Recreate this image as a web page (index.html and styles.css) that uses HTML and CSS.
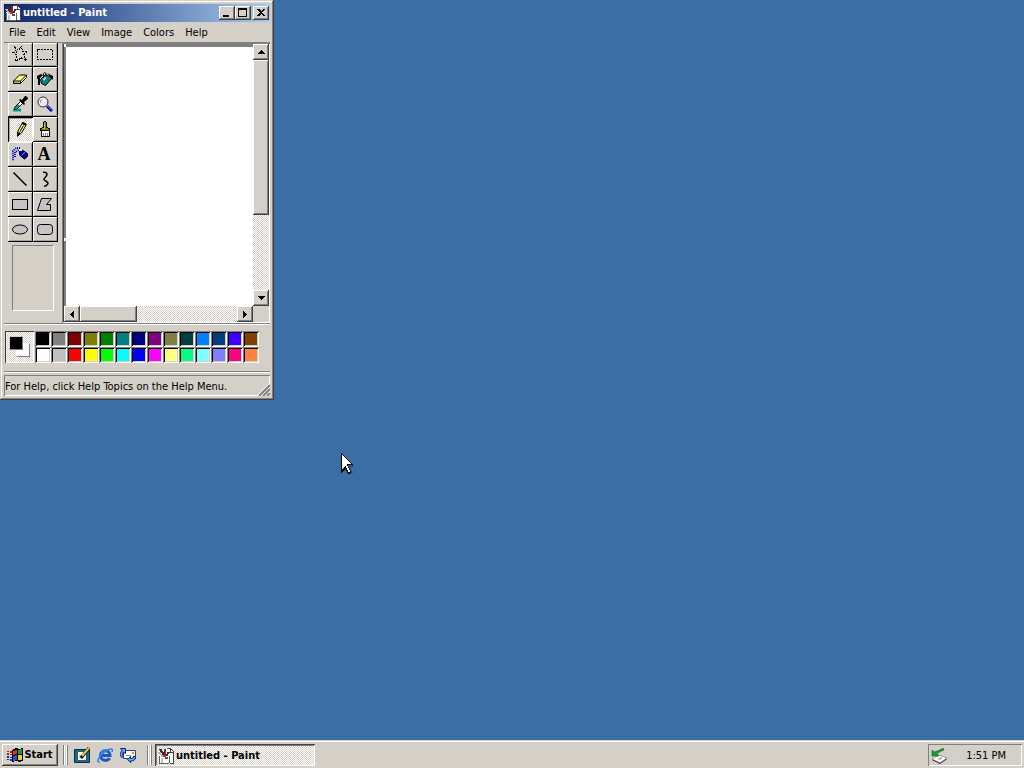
FILE: index.html
```html
<!DOCTYPE html>
<html lang="en">
<head>
    <meta charset="UTF-8">
    <meta name="viewport" content="width=device-width, initial-scale=1.0">
    <title>untitled - Paint</title>
    <link rel="stylesheet" href="styles.css">
</head>
<body>
    <!-- Shared icons -->
    <svg class="defs" width="0" height="0" aria-hidden="true">
        <symbol id="icon-paint" viewBox="0 0 16 16">
            <path fill="#fff" d="M7 1h6l3 3v11H7z"/>
            <path fill="#404040" d="M9 0h4v1H9zM13 1h1v1h1v1h1v2h-4V1zM15 5h1v11h-4v-1h3z"/>
            <path fill="#fff" d="M13 2v2h2z"/>
            <path fill="#fff" d="M1 7h11l-1 9H2z"/>
            <path fill="#606060" d="M1 8h1v7h1v1H1zM11 8h1v7h-1v1H3v-1h8z"/>
            <path fill="#c6c3c6" d="M3 10h2v5H3z"/>
            <path stroke="#303030" stroke-width="2" d="M2 1l4 6"/>
            <path stroke="#c0b8b0" stroke-width="2" d="M1 4l4 5"/>
            <path fill="#802030" d="M6 1h2v7H6z"/>
            <path stroke="#302850" stroke-width="2" d="M11 4L8 8"/>
            <path fill="#e02020" d="M5 7h3v2H5z"/>
            <path fill="#505050" d="M7 9h3v2H7z"/>
        </symbol>
    </svg>

    <main class="desktop">
        <section class="window" aria-label="untitled - Paint">
            <header class="titlebar">
                <svg class="icon"><use href="#icon-paint"/></svg>
                <h1>untitled - Paint</h1>
                <div class="window-buttons">
                    <button aria-label="Minimize"><svg width="12" height="10"><path d="M2 7h6v2H2z"/></svg></button>
                    <button aria-label="Maximize"><svg width="12" height="10"><path d="M1 0h9v9H1zM2 2v6h7V2z" fill-rule="evenodd"/></svg></button>
                    <button class="close" aria-label="Close"><svg width="12" height="10"><path d="M2 1h2l2 2 2-2h2L7 4.500 10 8H8L6 6 4 8H2l3-3.500z"/></svg></button>
                </div>
            </header>

            <nav class="menu">
                <button>File</button>
                <button>Edit</button>
                <button>View</button>
                <button>Image</button>
                <button>Colors</button>
                <button>Help</button>
            </nav>

            <div class="workspace">
                <aside class="toolbox">
                    <div class="tools">
                        <button aria-label="Free-Form Select"><svg viewBox="0 0 16 16"><path fill="none" stroke="#000" stroke-dasharray="2 1" d="M2.500.5l4 4 3-4 1 5h5l-4 3.500 3 5.500-5-2.500-6 3 1.500-5.500-4.500-3.500h4z"/></svg></button>
                        <button aria-label="Select"><svg viewBox="0 0 16 16"><path fill="none" stroke="#000" stroke-dasharray="2 1" d="M.5 3.500h15v10H.5z"/></svg></button>
                        <button aria-label="Eraser"><svg class="smooth" viewBox="0 0 16 16"><path fill="#ffff84" stroke="#000" d="M1.500 10l6-6h7v2.500l-6 6h-7z"/><path fill="#c6c342" d="M2 10.500h6v1.500H2z"/><path fill="none" stroke="#000" d="M8.500 12.500V10l6-6M1.500 10h7"/></svg></button>
                        <button aria-label="Fill With Color"><svg class="smooth" viewBox="0 0 16 16"><path fill="#008284" stroke="#000" d="M3.500 8.500l5-5 6.500 3.500-6.500 7.500-4-2z"/><path fill="#d0e8e8" d="M6 8l3-3 1 1-3 4z"/><path fill="none" stroke="#000" d="M6.500 7V2.500l1-1 1.500 1v4"/><path fill="#000" d="M0 5l4-2 2 1-3 3v7H1V8H0z"/><path fill="#000" d="M10 2l6 3v4l-2-2z"/></svg></button>
                        <button aria-label="Pick Color"><svg class="smooth" viewBox="0 0 16 16"><path stroke="#00a284" stroke-width="3" d="M1 14h8"/><path fill="#fff" stroke="#000" d="M2.500 13.500v-2l6-6 2 2-6 6z"/><path fill="#000" d="M7 4l1-1 2 1 3-4h1l2 2v1l-4 3 1 2-1 1z"/><path stroke="#008284" stroke-width="2" d="M3 13l4-4"/></svg></button>
                        <button aria-label="Magnifier"><svg class="smooth" viewBox="0 0 16 16"><circle cx="6" cy="6" r="5" fill="#efebef" stroke="#303030"/><path fill="none" stroke="#848284" d="M3.500 6.500V5L5 3.500"/><path stroke="#0000a5" stroke-width="3" d="M10 10l5 5"/><path stroke="#8482ff" d="M10 9.500l5 5"/></svg></button>
                        <button class="active" aria-label="Pencil" aria-pressed="true"><svg class="smooth" viewBox="0 0 16 16"><path fill="#ffff84" stroke="#000" d="M10.500 1.500l3.500 1.500-.5 2-4 7-4 3 .5-5z"/><path fill="#000" d="M5 11l4 1.500-4 3.500zM10 3l4 2 .5-2L11 1z"/><path stroke="#000" d="M11.500 4.500l-4 7"/></svg></button>
                        <button aria-label="Brush"><svg viewBox="0 0 16 16"><path fill="#848200" stroke="#000" d="M6.500 6V1.500l1-1h1l1 1V6l3 2v1.500h-9V8z"/><path fill="#c6c300" d="M7 2h1v6H5l2-2z"/><path fill="#fff" stroke="#000" d="M4.500 9.500h8v6h-8z"/><path stroke="#848284" d="M6.500 12v3M8.500 12v3M10.500 12v3"/></svg></button>
                        <button aria-label="Airbrush"><svg class="smooth" viewBox="0 0 16 16"><path fill="none" stroke="#0000c6" stroke-dasharray="1 1" stroke-width="2" d="M8 2H4L1 5v10M3 11V6l4-2"/><path fill="#0000a5" stroke="#000" d="M7.500 5.500l2-2 6 4v3l-3 2.500-5-4z"/><path fill="#fff" d="M7 3h3v2H7z"/><path stroke="#8482ff" d="M10 9l3-3"/></svg></button>
                        <button class="text-tool" aria-label="Text">A</button>
                        <button aria-label="Line"><svg class="smooth" viewBox="0 0 16 16"><path stroke="#000" stroke-width="1.500" d="M1.500 1.500l13 13"/></svg></button>
                        <button aria-label="Curve"><svg class="smooth" viewBox="0 0 16 16"><path fill="none" stroke="#000" stroke-width="1.500" d="M6 1.500c4-1 5 2 2.500 4.500s-2 3 1 4.500 1 4-2.500 5"/></svg></button>
                        <button aria-label="Rectangle"><svg viewBox="0 0 16 16"><path fill="#c6c3c6" stroke="#000" d="M.5 3.500h15v10H.5z"/></svg></button>
                        <button aria-label="Polygon"><svg class="smooth" viewBox="0 0 16 16"><path fill="#c6c3c6" stroke="#000" d="M4.500 2.500h10l-5 6h4v6H.5z"/></svg></button>
                        <button aria-label="Ellipse"><svg class="smooth" viewBox="0 0 16 16"><ellipse cx="8" cy="8.500" rx="7.500" ry="4.500" fill="#c6c3c6" stroke="#000"/></svg></button>
                        <button aria-label="Rounded Rectangle"><svg class="smooth" viewBox="0 0 16 16"><rect x=".5" y="3.500" width="15" height="10" rx="3" fill="#c6c3c6" stroke="#000"/></svg></button>
                    </div>
                    <div class="tool-options"></div>
                </aside>

                <div class="view">
                    <div class="page">
                        <span class="handle"></span>
                        <div class="paper"></div>
                        <span class="handle middle"></span>
                    </div>
                    <div class="scrollbar vertical">
                        <button aria-label="Scroll up"><svg width="7" height="4"><path d="M3 0h1v1h1v1h1v1h1v1H0V3h1V2h1V1h1z"/></svg></button>
                        <div class="thumb"></div>
                        <button class="end" aria-label="Scroll down"><svg width="7" height="4"><path d="M0 0h7v1H6v1H5v1H4v1H3V3H2V2H1V1H0z"/></svg></button>
                    </div>
                    <div class="scrollbar horizontal">
                        <button aria-label="Scroll left"><svg width="4" height="7"><path d="M4 0v7H3V6H2V5H1V4H0V3h1V2h1V1h1V0z"/></svg></button>
                        <div class="thumb"></div>
                        <button class="end" aria-label="Scroll right"><svg width="4" height="7"><path d="M0 0h1v1h1v1h1v1h1v1H3v1H2v1H1v1H0z"/></svg></button>
                    </div>
                </div>
            </div>

            <div class="colorbox">
                <div class="current">
                    <span class="back"></span>
                    <span class="fore"></span>
                </div>
                <div class="palette">
                    <button class="black" aria-label="Black"></button>
                    <button class="gray" aria-label="Gray"></button>
                    <button class="maroon" aria-label="Maroon"></button>
                    <button class="olive" aria-label="Olive"></button>
                    <button class="green" aria-label="Green"></button>
                    <button class="teal" aria-label="Teal"></button>
                    <button class="navy" aria-label="Navy"></button>
                    <button class="purple" aria-label="Purple"></button>
                    <button class="khaki" aria-label="Khaki"></button>
                    <button class="forest" aria-label="Forest"></button>
                    <button class="azure" aria-label="Azure"></button>
                    <button class="ocean" aria-label="Ocean"></button>
                    <button class="violet" aria-label="Violet"></button>
                    <button class="brown" aria-label="Brown"></button>
                    <button class="white" aria-label="White"></button>
                    <button class="silver" aria-label="Silver"></button>
                    <button class="red" aria-label="Red"></button>
                    <button class="yellow" aria-label="Yellow"></button>
                    <button class="lime" aria-label="Lime"></button>
                    <button class="cyan" aria-label="Cyan"></button>
                    <button class="blue" aria-label="Blue"></button>
                    <button class="magenta" aria-label="Magenta"></button>
                    <button class="cream" aria-label="Cream"></button>
                    <button class="mint" aria-label="Mint"></button>
                    <button class="ice" aria-label="Ice"></button>
                    <button class="lavender" aria-label="Lavender"></button>
                    <button class="pink" aria-label="Pink"></button>
                    <button class="orange" aria-label="Orange"></button>
                </div>
            </div>

            <footer class="statusbar">
                <p>For Help, click Help Topics on the Help Menu.</p>
                <svg class="grip smooth" width="13" height="13" aria-hidden="true">
                    <path stroke="#fff" d="M0 13L13 0M4 13l9-9M8 13l5-5"/>
                    <path stroke="#808080" stroke-width="2" d="M2 13L13 2M6 13l7-7M10 13l3-3"/>
                </svg>
            </footer>
        </section>

        <svg class="cursor" width="14" height="22" viewBox="0 0 14 22" aria-hidden="true">
            <path fill="#1d3f68" opacity=".6" d="M2 2l11 12H9l3 6-3 1-3-5-4 3z"/>
            <path fill="#000" d="M0 0h1v1h1v1h1v1h1v1h1v1h1v1h1v1h1v1h1v1h1v1h1v1h1v1H7v2h1v2h1v2h1v2H9v1H7v-1H6v-2H5v-2H4v1H3v1H2v1H1v1H0z"/>
            <path fill="#fff" d="M1 2h1v1h1v1h1v1h1v1h1v1h1v1h1v1h1v1h1v1H6v2h1v2h1v2h1v2H7v-2H6v-2H5v-2H4v1H3v1H2v1H1z"/>
        </svg>
    </main>

    <footer class="taskbar">
        <button class="start">
            <svg class="icon" viewBox="0 0 16 16" aria-hidden="true">
                <path fill="#000" d="M5 3l4-2 3 1 4-1v13l-4 1-3-1-4 1z"/>
                <path fill="#e03018" d="M6 4l4-1v4L6 8z"/>
                <path fill="#18a038" d="M11 3l4-1v5h-4z"/>
                <path fill="#2850d8" d="M6 9l4-1v5l-4 1z"/>
                <path fill="#f0d020" d="M11 8h4v5h-4z"/>
                <path fill="#b02030" d="M0 4h2v1H0zM3 4h2v2H3zM0 6h2v2H0zM3 7h2v1H3z"/>
                <path fill="#1830a0" d="M0 9h2v2H0zM3 10h2v1H3zM0 12h2v1H0zM3 12h2v2H3z"/>
            </svg>
            Start
        </button>
        <span class="separator"></span>
        <nav class="quick-launch">
            <button aria-label="Show Desktop">
                <svg class="icon smooth" viewBox="0 0 16 16">
                    <path fill="#107088" stroke="#003048" d="M.5 2.500h15v13H.5z"/>
                    <path fill="#fff" stroke="#405060" d="M3.500 4.500h9v9h-9z"/>
                    <path fill="#60c0c0" d="M5 8h5v1H5zM5 10h4v1H5z"/>
                    <path stroke="#000" stroke-width="3" d="M7 11l8-10"/>
                    <path stroke="#f0c040" stroke-width="2" d="M8 9l7-8"/>
                </svg>
            </button>
            <button aria-label="Internet Explorer">
                <svg class="icon smooth" viewBox="0 0 16 16">
                    <path fill="none" stroke="#1858c8" stroke-width="3" d="M4 8.500h9c0-6-9-6.500-9.500 0 .5 6 7.500 6 9 2.500"/>
                    <path fill="none" stroke="#58a8f0" d="M4 8c0-5 4-6 7-4"/>
                    <path fill="none" stroke="#3080e0" stroke-width="1.500" d="M3 15c-5 1 0-8 7-12 5-2 6-1 5 2"/>
                </svg>
            </button>
            <button aria-label="Outlook Express">
                <svg class="icon smooth" viewBox="0 0 16 16">
                    <path fill="#fff" stroke="#304070" d="M3.500 3.500h12v8h-12z"/>
                    <path fill="none" stroke="#7088b0" d="M6 8.500h5"/>
                    <path fill="#e09020" d="M12 5h2v2h-2z"/>
                    <path fill="#68a8f0" stroke="#082080" d="M.5 1.500h5v5l-2-1.500c-1 1-1 3 0 4.500l-2 1c-2-3-1-5 .5-7z"/>
                    <path fill="#68a8f0" stroke="#082080" d="M7.500 12.500l3-3v2c2 0 3-1 3-2.500l2 1c0 3-2 4-5 4v1.500z"/>
                </svg>
            </button>
        </nav>
        <span class="separator"></span>
        <button class="task" aria-pressed="true">
            <svg class="icon" aria-hidden="true"><use href="#icon-paint"/></svg>
            untitled - Paint
        </button>
        <div class="tray">
            <svg class="icon smooth" viewBox="0 0 16 16" aria-hidden="true">
                <path fill="#202020" d="M1 12l6-3 9 2-7 5z"/>
                <path fill="#fff" stroke="#505050" stroke-width=".5" d="M1 11l7-4 8 3-7 5z"/>
                <path fill="#b0b0b0" d="M6 11l4-2 2 1-3 2z"/>
                <path fill="#18a030" stroke="#004010" stroke-width=".5" d="M1 8V2l2 2c3-1 5-1 9-4l1 2C10 3 8 4 6 6l2 2z"/>
            </svg>
            <time>1:51 PM</time>
        </div>
    </footer>
</body>
</html>
```
FILE: styles.css
```css
* {
    box-sizing: border-box;
}

body {
    display: flex;
    flex-direction: column;
    min-height: 100vh;
    margin: 0;
    background-color: #3a6ea5;
    color: #000;
    font-family: Tahoma, "DejaVu Sans Condensed", sans-serif;
    font-size: 11px;
    line-height: 14px;
}

button {
    display: flex;
    align-items: center;
    justify-content: center;
    padding: 0;
    border: none;
    background-color: #d4d0c8;
    color: inherit;
    font: inherit;
}

svg {
    display: block;
    flex: none;
    shape-rendering: crispEdges;
}

.smooth {
    shape-rendering: auto;
}

.defs {
    position: absolute;
}

.icon {
    width: 16px;
    height: 16px;
}

.desktop {
    position: relative;
    flex: 1;
}

/* Window */
.window {
    width: 274px;
    padding: 4px;
    background-color: #d4d0c8;
    box-shadow: inset -1px -1px #404040, inset 1px 1px #d4d0c8, inset -2px -2px #808080, inset 2px 2px #fff;
}

.titlebar {
    display: flex;
    align-items: center;
    gap: 2px;
    height: 18px;
    padding: 0 1px;
    background: linear-gradient(to right, #0a246a, #a6caf0);
    color: #fff;
}

.titlebar h1 {
    flex: 1;
    margin: 0;
    font-size: 11px;
    font-weight: bold;
}

.window-buttons {
    display: flex;
}

.window-buttons button {
    width: 16px;
    height: 14px;
}

.window-buttons .close {
    margin-left: 2px;
}

.window-buttons button,
.thumb,
.scrollbar button {
    background-color: #d4d0c8;
    box-shadow: inset -1px -1px #404040, inset 1px 1px #fff, inset -2px -2px #808080;
}

.menu {
    display: flex;
    gap: 1px;
    height: 20px;
}

.menu button {
    padding: 1px 5px 0;
}

/* Toolbox and drawing area */
.workspace {
    display: flex;
    border-top: 1px solid #808080;
    border-bottom: 1px solid #808080;
    box-shadow: 0 1px #fff;
}

.toolbox {
    width: 58px;
    padding: 0 4px;
}

.tools {
    display: grid;
    grid-template-columns: 25px 25px;
    grid-template-rows: 24px;
    grid-auto-rows: 25px;
}

.tools button {
    padding: 0 2px 2px 0;
    box-shadow: inset -1px -1px #000, inset 1px 1px #fff, inset -2px -2px #a0a0a0;
}

.tools svg {
    width: 16px;
    height: 16px;
}

.tools .active {
    box-shadow: inset 1px 1px #000, inset -1px -1px #fff, inset 2px 2px #a0a0a0;
}

.tools .text-tool {
    padding-right: 3px;
    font-family: "Liberation Serif", serif;
    font-size: 18px;
    font-weight: bold;
}

.tools .active,
.scrollbar,
.current,
.task {
    background: conic-gradient(#fff 25%, #d4d0c8 0 50%, #fff 0 75%, #d4d0c8 0) 0 0 / 2px 2px;
}

.tool-options {
    width: 42px;
    height: 66px;
    margin: 3px 4px 12px;
    border: 1px solid;
    border-color: #808080 #fff #fff #808080;
}

.view {
    display: grid;
    flex: 1;
    grid-template-columns: 1fr 16px;
    grid-template-rows: 1fr 16px;
    padding: 1px 1px 1px 2px;
    box-shadow: inset 1px 1px #808080, inset -1px -1px #fff, inset 2px 2px #404040;
}

.page {
    display: grid;
    grid-template-columns: 2px 1fr;
    grid-template-rows: 3px 1fr;
    background-color: #808080;
}

.paper {
    grid-area: 2 / 2;
    background-color: #fff;
}

.handle {
    grid-area: 1 / 1;
    width: 2px;
    height: 3px;
    background-color: #fff;
}

.handle.middle {
    grid-area: 2 / 1;
    align-self: end;
    margin-bottom: 65px;
}

.scrollbar {
    display: flex;
}

.scrollbar button {
    width: 16px;
    height: 16px;
}

.vertical {
    flex-direction: column;
}

.vertical .thumb {
    height: 59%;
}

.vertical .end {
    margin-top: auto;
}

.horizontal .thumb {
    width: 30%;
}

.horizontal .end {
    margin-left: auto;
}

/* Colors */
.colorbox {
    display: flex;
    gap: 1px;
    padding: 7px 1px 8px;
}

.current {
    display: grid;
    grid-template-columns: 7px 7px 7px;
    grid-template-rows: 7px 7px 7px;
    width: 29px;
    height: 32px;
    padding: 5px 4px;
    box-shadow: inset 1px 1px #404040, inset -1px -1px #fff;
}

.fore,
.back {
    border: 1px solid;
    border-color: #fff #808080 #808080 #fff;
}

.fore {
    grid-area: 1 / 1 / 3 / 3;
    background-color: #000;
    border-color: #d4d0c8 #808080 #808080 #d4d0c8;
}

.back {
    grid-area: 2 / 2 / 4 / 4;
    background-color: #fff;
}

.palette {
    display: grid;
    grid-template-columns: repeat(14, 16px);
    grid-auto-rows: 16px;
}

.palette button {
    box-shadow: inset 1px 1px #808080, inset -1px -1px #fff, inset 2px 2px #000, inset -2px -2px #d4d0c8;
}

.black { background-color: #000; }
.gray { background-color: #808080; }
.maroon { background-color: #800000; }
.olive { background-color: #808000; }
.green { background-color: #008000; }
.teal { background-color: #008080; }
.navy { background-color: #000080; }
.purple { background-color: #800080; }
.khaki { background-color: #808040; }
.forest { background-color: #004040; }
.azure { background-color: #0080ff; }
.ocean { background-color: #004080; }
.violet { background-color: #4000ff; }
.brown { background-color: #804000; }
.white { background-color: #fff; }
.silver { background-color: #c0c0c0; }
.red { background-color: #f00; }
.yellow { background-color: #ff0; }
.lime { background-color: #0f0; }
.cyan { background-color: #0ff; }
.blue { background-color: #00f; }
.magenta { background-color: #f0f; }
.cream { background-color: #ffff80; }
.mint { background-color: #00ff80; }
.ice { background-color: #80ffff; }
.lavender { background-color: #8080ff; }
.pink { background-color: #ff0080; }
.orange { background-color: #ff8040; }

/* Status bar */
.statusbar {
    display: flex;
    align-items: flex-end;
    justify-content: space-between;
    height: 25px;
    border-top: 1px solid #808080;
    box-shadow: inset 0 1px #fff, inset 0 3px #d4d0c8, inset 1px 0 #808080, inset 0 4px #808080, inset -1px -1px #fff;
}

.statusbar p {
    margin: 0;
    padding: 0 0 2px 1px;
    white-space: nowrap;
}

.cursor {
    position: absolute;
    left: 341px;
    top: 453px;
}

/* Taskbar */
.taskbar {
    display: flex;
    align-items: center;
    height: 28px;
    padding: 4px 2px 2px;
    background-color: #d4d0c8;
    box-shadow: inset 0 1px #d4d0c8, inset 0 2px #fff;
}

.taskbar button {
    height: 22px;
}

.taskbar .start {
    gap: 1px;
    width: 56px;
    font-weight: bold;
    box-shadow: inset -1px -1px #404040, inset 1px 1px #fff, inset -2px -2px #808080;
}

.separator {
    width: 5px;
    height: 20px;
    margin-left: 5px;
    border-left: 1px solid #808080;
    border-right: 1px solid #808080;
    box-shadow: inset 1px 0 #fff, inset -1px 0 #fff;
}

.quick-launch {
    display: flex;
    gap: 7px;
    padding: 0 6px;
}

.taskbar .task {
    justify-content: flex-start;
    gap: 2px;
    width: 160px;
    margin-left: 3px;
    padding: 2px 3px 0;
    font-weight: bold;
    box-shadow: inset 1px 1px #404040, inset -1px -1px #fff, inset 2px 2px #808080;
}

.tray {
    display: flex;
    align-items: center;
    justify-content: space-between;
    width: 94px;
    height: 22px;
    margin-left: auto;
    padding: 1px 16px 0 3px;
    box-shadow: inset 1px 1px #808080, inset -1px -1px #fff;
}
```
